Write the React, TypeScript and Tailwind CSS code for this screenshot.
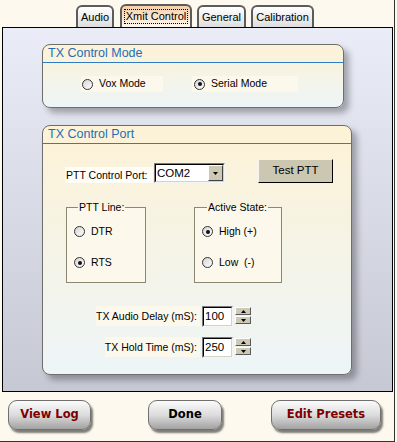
import React from "react";

function Radio({ checked }: { checked?: boolean }) {
  return (
    <span className="relative inline-flex w-[11px] h-[11px] rounded-full border border-[#333] bg-gradient-to-br from-[#d4d4d4] to-white items-center justify-center shrink-0">
      {checked && <span className="w-[4px] h-[4px] rounded-full bg-[#111]" />}
    </span>
  );
}

function GroupBox({ title, className, children }: { title: string; className: string; children?: React.ReactNode }) {
  return (
    <div className={"rounded-[8px] border border-[#6e6e6e] bg-gradient-to-b from-[#fdf2d6] to-[#edf5f7] shadow-[5px_5px_6px_rgba(0,0,0,0.3)] overflow-hidden " + className}>
      <div className="h-[18px] border-b border-[#2f7cc4] pl-[5px] text-[#1f6db8] text-[12.5px] leading-[17px]">{title}</div>
      {children}
    </div>
  );
}

function Tab({ label, selected, w }: { label: string; selected?: boolean; w: string }) {
  return (
    <div
      className={
        "flex items-center justify-center rounded-t-[6px] border-2 border-b-0 border-[#5c5c5c] text-[11px] text-black " +
        w +
        (selected
          ? " h-[23px] bg-gradient-to-b from-[#f6cfa8] to-[#fff8ee]"
          : " h-[22px] bg-gradient-to-b from-[#ffffff] to-[#dedede]")
      }
    >
      {selected ? (
        <span className="border border-dotted border-black px-[1px] leading-[13px]">{label}</span>
      ) : (
        <span className="leading-[13px]">{label}</span>
      )}
    </div>
  );
}

function SpinBtn({ up }: { up?: boolean }) {
  return (
    <div className="w-[16px] h-[8px] bg-[#cdc9b4] border border-t-white border-l-white border-r-[#5a5a5a] border-b-[#5a5a5a] flex items-center justify-center">
      <svg width="5" height="3" viewBox="0 0 5 3">
        {up ? <path d="M2.5 0 L5 3 L0 3 Z" fill="#000" /> : <path d="M0 0 L5 0 L2.5 3 Z" fill="#000" />}
      </svg>
    </div>
  );
}

function SpinRow({ label, value }: { label: string; value: string }) {
  return (
    <div className="flex items-start">
      <div className="w-[157px] flex justify-end">
        <span className="bg-[#fdf8ec] h-[20px] leading-[20px] pr-[3px]">{label}</span>
      </div>
      <div className="ml-[2px] w-[31px] h-[21px] border border-t-[#7a7a7a] border-l-[#7a7a7a] border-r-[#f4f4f4] border-b-[#f4f4f4]">
        <div className="w-full h-full border border-t-black border-l-black border-r-[#d6d2c6] border-b-[#d6d2c6] bg-white pl-[1px] leading-[17px] text-[11.5px]">
          {value}
        </div>
      </div>
      <div className="ml-[2px] mt-[1px] flex flex-col gap-[1px]">
        <SpinBtn up />
        <SpinBtn />
      </div>
    </div>
  );
}

function GlossyButton({ label, w, color }: { label: string; w: string; color: string }) {
  return (
    <div
      className={
        "h-[30px] rounded-[9px] border border-[#707070] bg-gradient-to-b from-[#fbfbfb] via-[#dcdcdc] to-[#a2a2a2] shadow-[2px_3px_2px_rgba(0,0,0,0.5)] flex items-center justify-center font-['DejaVu_Sans',sans-serif] font-bold text-[11.5px] " +
        w +
        " " +
        color
      }
    >
      {label}
    </div>
  );
}

export default function App() {
  return (
    <div className="w-[397px] h-[442px] bg-[#fdf9ee] font-['Liberation_Sans',Arial,sans-serif] text-[10.5px] text-black overflow-hidden">
      <div className="w-[395px] h-[442px] border-r border-b border-[#333] flex flex-col">
        {/* tabs */}
        <div className="h-[27px] pl-[76px] flex items-end">
          <Tab label="Audio" w="w-[38px]" />
          <div className="ml-[6px]">
            <Tab label="Xmit Control" w="w-[72px]" selected />
          </div>
          <div className="ml-[5px]">
            <Tab label="General" w="w-[49px]" />
          </div>
          <div className="ml-[5px]">
            <Tab label="Calibration" w="w-[63px]" />
          </div>
        </div>

        {/* panel */}
        <div className="ml-[2px] w-[391px] h-[365px] border border-black bg-gradient-to-b from-[#eaecf8] to-[#c6c8d4] pt-[16px] pl-[39px]">
          <GroupBox title="TX Control Mode" className="w-[302px] h-[64px]">
            <div className="flex mt-[13px] ml-[38px]">
              <div className="w-[82px] h-[16px] bg-[#fdf8ec] flex items-center">
                <span className="ml-[1px] flex"><Radio /></span>
                <span className="ml-[6px]">Vox Mode</span>
              </div>
              <div className="ml-[29px] w-[106px] h-[16px] bg-[#fdf8ec] flex items-center">
                <span className="ml-[2px] flex"><Radio checked /></span>
                <span className="ml-[6px]">Serial Mode</span>
              </div>
            </div>
          </GroupBox>

          <GroupBox title="TX Control Port" className="mt-[17px] w-[310px] h-[250px]">
            <div className="flex items-end mt-[15px] ml-[22px]">
              <div className="w-[88px] h-[16px] bg-[#fffdf6] leading-[16px] pl-[1px]">PTT Control Port:</div>
              <div className="ml-[1px] w-[71px] h-[20px] border border-t-[#7a7a7a] border-l-[#7a7a7a] border-r-[#f4f4f4] border-b-[#f4f4f4]">
                <div className="w-full h-full border border-t-black border-l-black border-r-[#d6d2c6] border-b-[#d6d2c6] bg-white flex">
                  <span className="flex-1 pl-[1px] leading-[16px] text-[11.5px]">COM2</span>
                  <div className="w-[15px] h-full bg-[#cdc9b4] border border-t-white border-l-white border-r-[#404040] border-b-[#404040] flex items-center justify-center">
                    <svg width="5" height="3" viewBox="0 0 5 3">
                      <path d="M0 0 L5 0 L2.5 3 Z" fill="#000" />
                    </svg>
                  </div>
                </div>
              </div>
              <div className="ml-[33px] w-[75px] h-[24px] bg-[#cbc7b1] border border-t-[#f4f4f4] border-l-[#f4f4f4] border-r-black border-b-black flex items-center justify-center text-[11.5px]">
                Test PTT
              </div>
            </div>

            <div className="flex mt-[18px] ml-[23px]">
              <fieldset className="m-0 p-0 pl-[7px] w-[80px] h-[82px] border border-[#8a8870] bg-[#fdf8ec]">
                <legend className="ml-[4px] px-[1px] leading-[13px]">PTT Line:</legend>
                <div className="mt-[11px] flex items-center h-[13px]">
                  <Radio />
                  <span className="ml-[6px]">DTR</span>
                </div>
                <div className="mt-[18px] flex items-center h-[13px]">
                  <Radio checked />
                  <span className="ml-[6px]">RTS</span>
                </div>
              </fieldset>
              <fieldset className="ml-[48px] m-0 p-0 pl-[7px] w-[88px] h-[82px] border border-[#8a8870] bg-[#fdf8ec]">
                <legend className="ml-[5px] px-[1px] leading-[13px]">Active State:</legend>
                <div className="mt-[11px] flex items-center h-[13px]">
                  <Radio checked />
                  <span className="ml-[6px]">High (+)</span>
                </div>
                <div className="mt-[18px] flex items-center h-[13px]">
                  <Radio />
                  <span className="ml-[6px]">Low&nbsp; (-)</span>
                </div>
              </fieldset>
            </div>

            <div className="mt-[23px] flex flex-col gap-[10px]">
              <SpinRow label="TX Audio Delay (mS):" value="100" />
              <SpinRow label="TX Hold Time (mS):" value="250" />
            </div>
          </GroupBox>
        </div>

        {/* bottom buttons */}
        <div className="mt-[8px] flex">
          <div className="ml-[8px]">
            <GlossyButton label="View Log" w="w-[83px]" color="text-[#800000]" />
          </div>
          <div className="ml-[57px]">
            <GlossyButton label="Done" w="w-[74px]" color="text-black" />
          </div>
          <div className="ml-[49px]">
            <GlossyButton label="Edit Presets" w="w-[110px]" color="text-[#800000]" />
          </div>
        </div>
      </div>
    </div>
  );
}
